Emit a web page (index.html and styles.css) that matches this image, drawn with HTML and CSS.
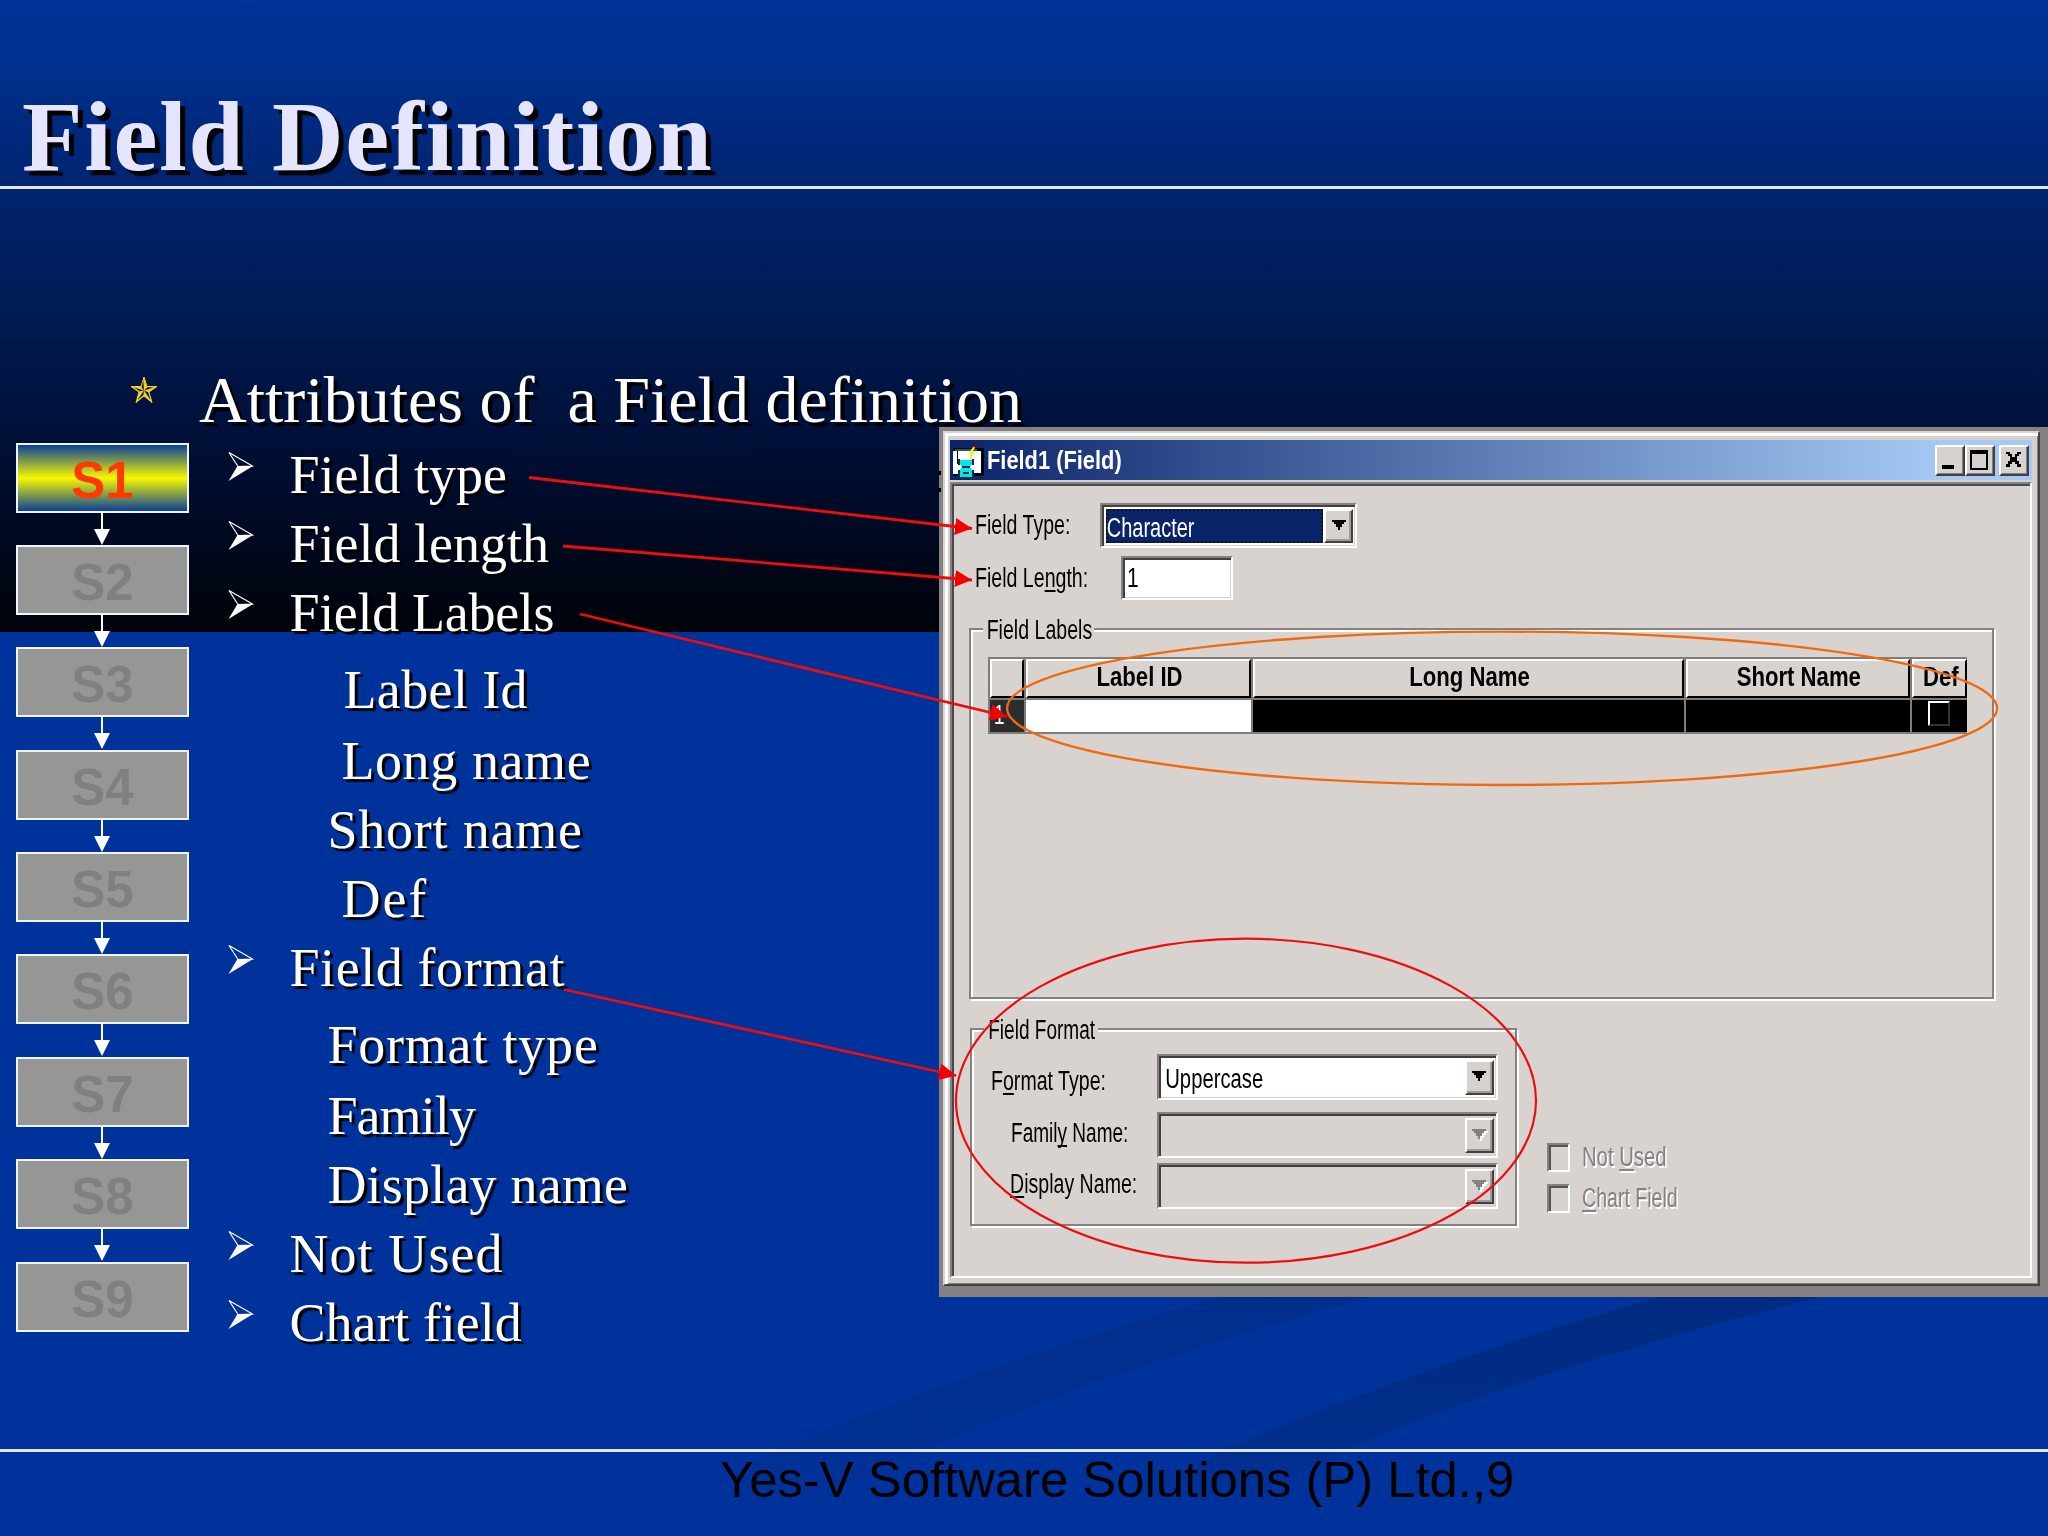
FILE: index.html
```html
<!DOCTYPE html>
<html lang="en">
<head>
<meta charset="utf-8">
<title>Field Definition</title>
<link rel="stylesheet" href="styles.css">
</head>
<body>
<svg width="0" height="0" class="defs">
  <symbol id="bullet" viewBox="0 0 26 31"><path d="M1 1.5L24.5 15 10 15.5Z" fill="none" stroke="#fff" stroke-width="1.2"/><path d="M9.500 15L25 15 0.500 30Z" fill="#fff"/></symbol>
  <symbol id="drop" viewBox="0 0 14 10"><path d="M0 0H14V2H12V4H10V7H8V10H6V7H4V4H2V2H0Z"/></symbol>
</svg>
<div class="slide">
  <svg class="swoosh" viewBox="0 0 2048 240">
    <defs>
      <linearGradient id="fa" x1="0" y1="0" x2="0" y2="1"><stop offset="0" stop-color="#002b80"/><stop offset=".7" stop-color="#002b80" stop-opacity=".65"/><stop offset="1" stop-color="#002b80" stop-opacity="0"/></linearGradient>
      <linearGradient id="fb" x1="0" y1="0" x2="0" y2="1"><stop offset="0" stop-color="#002b80" stop-opacity=".55"/><stop offset=".7" stop-color="#002b80" stop-opacity=".3"/><stop offset="1" stop-color="#002b80" stop-opacity="0"/></linearGradient>
    </defs>
    <path d="M1660 0Q1430 65 1228 151L1130 205H1240L1350 151Q1540 70 1820 0Z" fill="url(#fa)"/>
    <path d="M1220 0Q990 65 780 151L690 200H820L930 151Q1130 65 1370 0Z" fill="url(#fb)"/>
  </svg>
  <header class="head"><h1>Field Definition</h1></header>
  <main class="main">
    <h2 class="topic">
      <svg class="star" viewBox="0 0 28 28"><path d="M14 1L17 10.500H27L19 16 22 26.500 14 20 6 26.500 9 16 1 10.500H11Z" fill="#f5cc20" stroke="#f5cc20" stroke-width="1"/><path d="M14 14.500L13.200 4 11.700 11.300ZM14 14.500L23.500 11.500 17.500 11.300ZM14 14.500L20.500 24 18.200 16.300ZM14 14.500L7.500 24 13.400 19ZM14 14.500L4 11.500 9.800 15.300Z" fill="#001848"/></svg>
      <span>Attributes of&nbsp; a Field definition</span>
    </h2>
    <div class="body">
      <ol class="steps">
        <li class="on">S1</li><li>S2</li><li>S3</li><li>S4</li><li>S5</li><li>S6</li><li>S7</li><li>S8</li><li>S9</li>
      </ol>
      <ul class="list">
        <li><svg><use href="#bullet"/></svg>Field type</li>
        <li><svg><use href="#bullet"/></svg>Field length</li>
        <li class="tight"><svg><use href="#bullet"/></svg>Field Labels</li>
        <li class="sub first in3">Label Id</li>
        <li class="sub second in2">Long name</li>
        <li class="sub wide">Short name</li>
        <li class="sub in2 def">Def</li>
        <li class="wide"><svg><use href="#bullet"/></svg>Field format</li>
        <li class="sub first wide">Format type</li>
        <li class="sub second family">Family</li>
        <li class="sub">Display name</li>
        <li class="used"><svg><use href="#bullet"/></svg>Not Used</li>
        <li><svg><use href="#bullet"/></svg>Chart field</li>
      </ul>
      <section class="desk">
        <div class="window">
          <div class="titlebar">
            <svg class="app" viewBox="0 0 31 35"><path d="M0 4H31V32H0Z" fill="#fff"/><path d="M0 4H31V7H0ZM28 7H31V32H20V29H28ZM0 30H8V32H0ZM4 7H5V20H4Z" fill="#000"/><path d="M2 5H24V7H2Z" fill="#186060"/><path d="M7 16H19V20L17 23 19 26V33H7V26L9 23 7 20Z" fill="#00e5f0"/><path d="M5 15H7V21H5ZM19 15H21V21H19ZM5 26H7V32H5ZM19 26H21V32H19ZM8 33H18V35H8ZM9 22H17V24H9ZM10 28H16V30H10Z" fill="#0a3038"/><path d="M17 15L20 8 18 8 22 2" fill="none" stroke="#ffee20" stroke-width="2.200"/><path d="M21 3L24 0" stroke="#700030" stroke-width="3"/></svg>
            <span class="caption">Field1 (Field)</span>
            <span class="btn"><svg viewBox="0 0 30 31"><path d="M7 20H19V24H7Z"/></svg></span>
            <span class="btn"><svg viewBox="0 0 30 31"><path d="M5 5H23V25H5ZM7 9V23H21V9Z" fill-rule="evenodd"/></svg></span>
            <span class="btn close"><svg viewBox="0 0 30 31"><path d="M7 7H11V9H13V12H16V9H18V7H22V9H20V11H18V16H20V19H22V22H18V19H16V17H13V19H11V22H7V19H9V16H11V11H9V9H7Z"/></svg></span>
          </div>
          <div class="client">
            <div class="row r1"><label>Field Type:</label><div class="field combo c1"><span class="sel"><i>Character</i></span><b class="arrow"><svg><use href="#drop"/></svg></b></div></div>
            <div class="row r2"><label>Field Le<u>n</u>gth:</label><div class="field len"><i>1</i></div></div>
            <div class="group g1">
              <div class="legend"><span>Field Labels</span></div>
              <div class="grid">
                <div class="th"></div><div class="th"><span>Label ID</span></div><div class="th"><span>Long Name</span></div><div class="th"><span>Short Name</span></div><div class="th"><span>Def</span></div>
                <div class="td num"><i>1</i></div><div class="td edit"></div><div class="td"></div><div class="td"></div><div class="td chk"><b></b></div>
              </div>
            </div>
            <div class="lower">
              <div class="group g2">
                <div class="legend"><span>Field Format</span></div>
                <div class="row f1"><label>F<u>o</u>rmat Type:</label><div class="field combo white"><i class="upper">Uppercase</i><b class="arrow"><svg><use href="#drop"/></svg></b></div></div>
                <div class="row f2"><label>Famil<u>y</u> Name:</label><div class="field combo off"><b class="arrow"><svg><use href="#drop"/></svg></b></div></div>
                <div class="row f3"><label><u>D</u>isplay Name:</label><div class="field combo off"><b class="arrow"><svg><use href="#drop"/></svg></b></div></div>
              </div>
              <div class="checks">
                <div class="check"><b></b><span class="nu">Not <u>U</u>sed</span></div>
                <div class="check"><b></b><span><u>C</u>hart Field</span></div>
              </div>
            </div>
          </div>
        </div>
      </section>
    </div>
  </main>
  <footer class="foot">Yes-V Software Solutions (P) Ltd.,9</footer>
  <svg class="notes" viewBox="0 0 2048 1536">
    <defs><marker id="tip" markerUnits="userSpaceOnUse" markerWidth="18" markerHeight="18" refX="17" refY="8.500" orient="auto"><path d="M0 0L17 8.500 0 17Z" fill="#f40000"/></marker></defs>
    <path d="M938 471h3v4h-3zM938 488h3v4h-3z"/>
    <g stroke="#ee0c10" stroke-width="2.800" fill="none">
      <path d="M529 477.500L972 528.500" marker-end="url(#tip)"/>
      <path d="M563 546L972 580" marker-end="url(#tip)"/>
      <path d="M580 614L1007 716.500" marker-end="url(#tip)"/>
      <path d="M564 989.500L956 1075.500" marker-end="url(#tip)"/>
      <ellipse cx="1246" cy="1100.700" rx="290" ry="162" stroke-width="2.200"/>
      <ellipse cx="1502" cy="708.300" rx="495" ry="76.700" stroke="#f0690f" stroke-width="2.400"/>
    </g>
  </svg>
</div>
</body>
</html>
```
FILE: styles.css
```css
* { box-sizing: border-box; }
body { margin: 0; background: #003399; }
h1, h2, ol, ul { margin: 0; padding: 0; list-style: none; font-weight: normal; }
i, b { font-style: normal; font-weight: normal; }
.defs { position: absolute; }

.slide {
  position: relative;
  display: flex;
  flex-direction: column;
  width: 2048px;
  height: 1536px;
  overflow: hidden;
  background: linear-gradient(#003399 0, #003090 60px, #00236c 200px, #001a4e 330px, #00103a 430px, #00040e 610px, #00030a 632px, #00329b 632px, #00329b 100%);
  font-family: "Liberation Serif", "Times New Roman", serif;
  color: #fff;
}
.swoosh { position: absolute; left: 0; top: 1297px; width: 2048px; height: 240px; }
.head, .main, .foot { position: relative; }
.notes { position: absolute; left: 0; top: 0; width: 2048px; height: 1536px; pointer-events: none; }

.head { height: 189px; border-bottom: 3px solid #e2e6ff; padding: 82px 0 0 22px; }
.head h1 {
  font-size: 99px;
  line-height: 110px;
  font-weight: bold;
  letter-spacing: 1.8px;
  color: #e5e5ff;
  text-shadow: 5px 5px 1px #000;
  white-space: nowrap;
}

.main { height: 1260px; display: flex; flex-direction: column; }
.topic {
  height: 238px;
  padding: 174px 0 0 129px;
  display: flex;
  font-size: 66px;
  line-height: 74px;
  white-space: nowrap;
  text-shadow: 4px 4px 1px #000;
}
.star { width: 30px; height: 28px; margin: 13px 40px 0 0; flex: none; }

.body { display: flex; align-items: flex-start; }
.steps { width: 173px; margin: 15.500px 0 0 16px; display: flex; flex-direction: column; gap: 32.4px; }
.steps li {
  position: relative;
  height: 70px;
  border: 2px solid #eef5ff;
  background: #969694;
  color: #808080;
  font: bold 51px/71px "Liberation Sans", Arial, sans-serif;
  text-align: center;
}
.steps .on { background: linear-gradient(#0a4098 0, #f8f800 50%, #0a4098 100%); color: #ff3a00; }
.steps li::before {
  content: "";
  position: absolute;
  left: 83px;
  top: 67px;
  width: 2px;
  height: 20px;
  background: #fff;
}
.steps li::after {
  content: "";
  position: absolute;
  left: 76px;
  top: 84px;
  border: 8px solid transparent;
  border-top: 16px solid #fff;
  border-bottom: 0;
}
.steps li:last-child::before, .steps li:last-child::after { display: none; }

.list { width: 749.500px; padding: 13.500px 0 0 39px; font-size: 54px; line-height: 69px; text-shadow: 3px 3px 1px #000; }
.list li { display: flex; height: 69px; white-space: nowrap; }
.list svg { width: 26px; height: 31px; margin: 10.500px 35.500px 0 0; flex: none; }
.list .sub { padding-left: 99.500px; letter-spacing: .2px; }
.list .in2 { padding-left: 113.500px; letter-spacing: .6px; }
.list .in3 { padding-left: 115.500px; letter-spacing: .4px; }
.list .first { margin-top: 8px; }
.list .second { margin-top: 2px; }
.list .tight { letter-spacing: -.3px; }
.list .wide { letter-spacing: .6px; }
.list .sub.wide { letter-spacing: .8px; }
.list .def { letter-spacing: 2px; }
.list .family { letter-spacing: -.9px; }
.list .used { letter-spacing: 1.100px; }

.desk {
  flex: none;
  width: 1109.500px;
  height: 870px;
  margin-left: .5px;
  padding: 4px 0 0 4.500px;
  background: #858182;
  font: 27px/30px "Liberation Sans", Arial, sans-serif;
  color: #000;
}
.window {
  width: 1097px;
  height: 855px;
  padding: 4px 6px 3px 3px;
  background: #d5d2ce;
  border: 2px solid #d8d4d0;
  border-right-color: #444;
  border-bottom-color: #444;
  box-shadow: inset 3px 3px 0 #fff, inset -1px -1px 0 #858182;
}
.titlebar {
  display: flex;
  height: 40px;
  margin-top: 3px;
  margin-left: 2px;
  padding: 4.500px 3px 0 3px;
  background: linear-gradient(90deg, #0a246a, #a6caf5 92%);
}
.app { width: 31px; height: 35px; margin-top: -1px; flex: none; }
.caption { flex: 1; margin-left: 3px; font-size: 26px; font-weight: bold; color: #fff; line-height: 31px; white-space: nowrap; transform: scaleX(.84); transform-origin: 0 50%; }
.btn {
  width: 30px;
  height: 31px;
  background: #d6d3ce;
  border: 2px solid #fff;
  border-right-color: #404040;
  border-bottom-color: #404040;
  box-shadow: inset -1px -1px 0 #858182;
  flex: none;
}
.btn svg { display: block; width: 30px; height: 31px; margin: -2px; }
.close { margin-left: 4px; }
.client {
  height: 796px;
  margin: 2px 0 0 2px;
  padding: 18px 0 0 22.500px;
  background: #d8d3cf;
  border: 2px solid #858182;
  border-right-color: #fff;
  border-bottom-color: #fff;
  box-shadow: inset 2px 2px 0 #484848;
}
.row { display: flex; }
label, .legend span, .check span, i { display: block; white-space: nowrap; transform: scaleX(.725); transform-origin: 0 50%; }
label { flex: none; }
u { text-decoration-thickness: 2px; text-underline-offset: 3px; text-decoration-skip-ink: none; }
.r1 { height: 45px; margin-top: 1px; }
.r1 label { width: 125.500px; padding-top: 7px; }
.r2 { height: 44px; margin-top: 8px; }
.r2 label { width: 146.500px; padding-top: 7px; }
.field {
  display: flex;
  border: 2px solid #858182;
  border-right-color: #fff;
  border-bottom-color: #fff;
  box-shadow: inset 2px 2px 0 #404040, inset -1px -1px 0 #d6d3ce;
  background: #fff;
}
.c1 { width: 257px; height: 45px; padding: 4px 2px 3px 4px; }
.sel { width: 217px; height: 34px; background: #0a246a; outline: 2px dotted #101020; outline-offset: -2px; color: #fff; }
.sel i { padding: 4px 0 0 1px; transform: scaleX(.74); }
.arrow {
  width: 29px;
  margin-left: auto;
  background: #d6d3ce;
  border: 2px solid #fff;
  border-right-color: #404040;
  border-bottom-color: #404040;
  box-shadow: inset -2px -2px 0 #a09c9a;
  display: flex;
  justify-content: center;
  align-items: center;
}
.arrow svg { width: 14px; height: 10px; margin-top: -2px; }
.len { width: 112px; height: 44px; padding: 5px 0 0 4px; }
.len i { transform: scaleX(.78); }

.group { border: 2px solid #858182; box-shadow: 2px 2px 0 #fff, inset 2px 2px 0 #fff; }
.g1 { width: 1025.500px; height: 371px; margin: 27.500px 0 0 -6px; }
.legend { width: 111px; height: 30px; margin: -15px 0 0 12px; background: #d8d3cf; }
.legend span { padding-left: 5px; }
.grid {
  display: grid;
  grid-template-columns: 34px 225.500px 431px 224px 55px;
  grid-template-rows: 39px 32px;
  gap: 2px;
  width: 979.500px;
  margin: 12px 0 0 17px;
  padding: 1px;
  background: #807c7c;
  border: 1px solid #807c7c;
}
.th {
  background: #d8d3cf;
  border: 2px solid #fff;
  border-right-color: #000;
  border-bottom-color: #000;
  display: flex;
  justify-content: center;
  align-items: center;
  font-weight: bold;
}
.th span { white-space: nowrap; transform: scaleX(.82); margin: -3px -10px 0 -8px; }
.td { background: #000; }
.num { background: #2a2c2e; color: #fff; }
.num i { padding: 0 0 0 5px; }
.edit { background: #fff; }
.chk { display: flex; padding: 1px 0 0 16px; }
.chk b { width: 22px; height: 25px; border: 2px solid #fff; border-right-color: #333; border-bottom-color: #333; }

.lower { display: flex; }
.g2 { width: 547px; height: 198px; margin: 29px 0 0 -5px; }
.g2 .legend { width: 114px; }
.g2 .legend span { transform: scaleX(.705); padding-left: 6px; }
.g2 .combo { width: 341px; height: 46px; padding: 4px 2px 3px 4px; }
.f1 { margin-top: 9px; padding-left: 19.500px; height: 58px; }
.f1 label { width: 165.500px; padding-top: 12px; }
.f2 { padding-left: 39.500px; height: 51px; }
.f2 label { width: 145.500px; padding-top: 6px; transform: scaleX(.705); }
.f3 { padding-left: 38.500px; }
.f3 label { width: 146.500px; padding-top: 6px; }
.upper { padding: 4px 0 0 3px; transform: scaleX(.75); }
.g2 .off { background: #d8d3cf; }
.off svg { fill: #858182; filter: drop-shadow(2px 2px 0 #fff); }
.checks { margin: 144px 0 0 30px; }
.check { display: flex; height: 41px; color: #858182; text-shadow: 2px 2px 0 #fff; }
.check b { width: 23px; height: 29px; margin-right: 12px; border: 2px solid #858182; border-right-color: #fff; border-bottom-color: #fff; box-shadow: inset 2px 2px 0 #555; }
.check span { margin-top: -1px; }
.check .nu { transform: scaleX(.75); }

.foot { flex: 1; border-top: 3px solid #dfe6ff; padding-left: 720px; font: 50.800px/55px "Liberation Sans", Arial, sans-serif; color: #000; white-space: nowrap; }
```
